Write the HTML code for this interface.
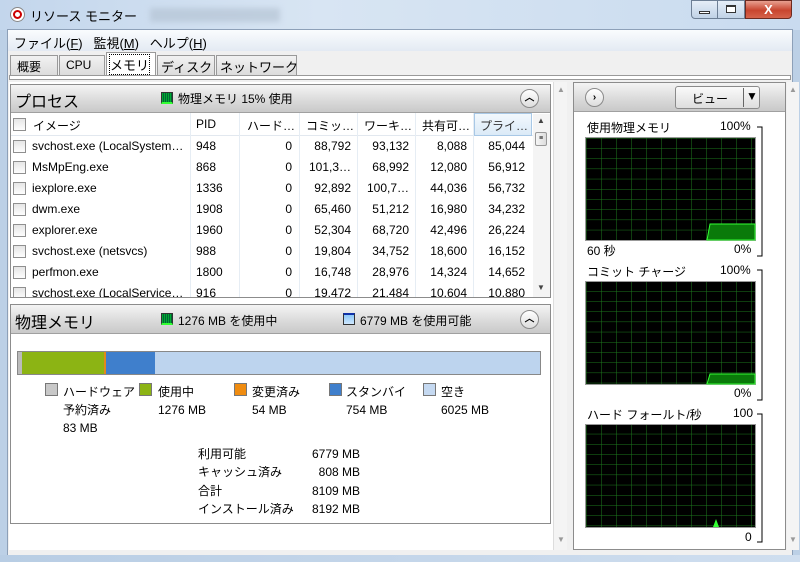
<!DOCTYPE html>
<html><head><meta charset="utf-8"><style>
*{margin:0;padding:0;box-sizing:border-box}
body{width:800px;height:562px;overflow:hidden;position:relative;background:#bcd0e6;font-family:"Liberation Sans","Noto Sans CJK JP",sans-serif;font-size:12px;color:#000}
.a{position:absolute}
.t{position:absolute;white-space:nowrap}
.cb{position:absolute;width:13px;height:13px;border:1px solid #8f8f8f;background:linear-gradient(#e6e6e6,#fdfdfd)}
.hdr{position:absolute;background:linear-gradient(#f4f4f4,#d9d9d9 60%,#c9c9c9);border-bottom:1px solid #a0a0a0}
.up{position:absolute;width:19px;height:19px;border-radius:50%;border:1px solid #8a8a8a;background:linear-gradient(#fff,#ddd);font-size:10px;text-align:center;line-height:17px;font-weight:bold}
.r{text-align:right}
.sw{position:absolute;width:13px;height:13px;border:1px solid #777}
</style></head><body>
<div class="a" style="left:0;top:0;width:800px;height:30px;background:linear-gradient(90deg,#c3d6ec,#d8e5f3 40%,#c9dbef)"></div>
<div class="a" style="left:10px;top:7px;width:15px;height:15px;border-radius:50%;border:1px solid #888;background:#fff"></div>
<div class="a" style="left:13px;top:10px;width:9px;height:9px;border-radius:50%;border:2px solid #c00"></div>
<div class="t" style="left:30px;top:6px;font-size:13px">リソース モニター</div>
<div class="a" style="left:150px;top:8px;width:130px;height:14px;background:#b0bfcf;filter:blur(3px);opacity:.6"></div>
<div class="a" style="left:691px;top:0;width:27px;height:19px;border:1px solid #6d7f95;border-radius:0 0 0 4px;background:linear-gradient(#e5eef8,#c0d2e6)"></div>
<div class="a" style="left:699px;top:11px;width:11px;height:3px;border:1px solid #333;background:#fff"></div>
<div class="a" style="left:717px;top:0;width:28px;height:19px;border:1px solid #6d7f95;background:linear-gradient(#e5eef8,#c0d2e6)"></div>
<div class="a" style="left:726px;top:5px;width:10px;height:8px;border:1px solid #333;border-top-width:2px;background:#fff"></div>
<div class="a" style="left:745px;top:0;width:47px;height:19px;border:1px solid #6d2a20;border-radius:0 0 4px 0;background:linear-gradient(#e8a090,#c8452f 55%,#d5634b);color:#fff;font-weight:bold;text-align:center;font-size:13px;line-height:17px">X</div>
<div class="a" style="left:7px;top:29px;width:786px;height:526px;background:#fff;border:1px solid #8da0b8"></div>
<div class="a" style="left:8px;top:30px;width:784px;height:21px;background:linear-gradient(#fafcfe,#e3eaf3)"></div>
<div class="t" style="left:14px;top:33px;font-size:13px">ファイル(<u>F</u>)&nbsp;&nbsp; 監視(<u>M</u>)&nbsp;&nbsp; ヘルプ(<u>H</u>)</div>
<div class="a" style="left:8px;top:51px;width:784px;height:504px;background:#f0f0f0"></div>
<div class="a" style="left:10px;top:55px;width:48px;height:20px;border:1px solid #999;border-bottom:none;background:linear-gradient(#f2f2f2,#dcdcdc)"></div><div class="t" style="left:17px;top:58px">概要</div>
<div class="a" style="left:59px;top:55px;width:46px;height:20px;border:1px solid #999;border-bottom:none;background:linear-gradient(#f2f2f2,#dcdcdc)"></div><div class="t" style="left:66px;top:58px">CPU</div>
<div class="a" style="left:106px;top:52px;width:50px;height:24px;border:1px solid #999;border-bottom:none;background:#fff"></div><div class="t" style="left:110px;top:55px;font-size:13px;outline:1px dotted #000">メモリ</div>
<div class="a" style="left:157px;top:55px;width:58px;height:20px;border:1px solid #999;border-bottom:none;background:linear-gradient(#f2f2f2,#dcdcdc)"></div><div class="t" style="left:161px;top:57px;font-size:13px">ディスク</div>
<div class="a" style="left:216px;top:55px;width:81px;height:20px;border:1px solid #999;border-bottom:none;background:linear-gradient(#f2f2f2,#dcdcdc)"></div><div class="t" style="left:220px;top:57px;font-size:13px">ネットワーク</div>
<div class="a" style="left:9px;top:75px;width:782px;height:5px;border:1px solid #999;background:#fff"></div>
<div class="a" style="left:9px;top:82px;width:544px;height:468px;background:#fff"></div>
<div class="a" style="left:553px;top:82px;width:14px;height:468px;background:#f4f4f4;border-left:1px solid #ddd"></div>
<div class="t" style="left:557px;top:85px;font-size:8px;color:#999">▲</div>
<div class="t" style="left:557px;top:535px;font-size:8px;color:#999">▼</div>
<div class="a" style="left:10px;top:84px;width:541px;height:214px;border:1px solid #8c8c8c;background:#fff"></div>
<div class="hdr" style="left:11px;top:85px;width:539px;height:28px"></div>
<div class="t" style="left:15px;top:88px;font-size:16px">プロセス</div>
<div class="a" style="left:161px;top:92px;width:12px;height:12px;background:repeating-linear-gradient(90deg,#0a3 0 1px,#063 1px 2px);border:1px solid #333;border-bottom:2px solid #3f3"></div>
<div class="t" style="left:178px;top:90px">物理メモリ 15% 使用</div>
<div class="up" style="left:520px;top:89px">︿</div>
<div class="a" style="left:11px;top:113px;width:539px;height:23px;background:#fff;border-bottom:1px solid #e2e8ef"></div>
<div class="a" style="left:474px;top:113px;width:58px;height:23px;background:linear-gradient(#f2f8fd,#dbeaf7);border:1px solid #a8c8e6"></div>
<div class="cb" style="left:13px;top:118px"></div>
<div class="t" style="left:33px;top:117px">イメージ</div>
<div class="t" style="left:196px;top:117px">PID</div>
<div class="t" style="left:247px;top:117px">ハード…</div>
<div class="t" style="left:306px;top:117px">コミッ…</div>
<div class="t" style="left:364px;top:117px">ワーキ…</div>
<div class="t" style="left:422px;top:117px">共有可…</div>
<div class="t" style="left:480px;top:117px;color:#333">プライ…</div>
<div class="a" style="left:190px;top:113px;width:1px;height:184px;background:#e6edf4"></div>
<div class="a" style="left:239px;top:113px;width:1px;height:184px;background:#e6edf4"></div>
<div class="a" style="left:299px;top:113px;width:1px;height:184px;background:#e6edf4"></div>
<div class="a" style="left:357px;top:113px;width:1px;height:184px;background:#e6edf4"></div>
<div class="a" style="left:415px;top:113px;width:1px;height:184px;background:#e6edf4"></div>
<div class="a" style="left:473px;top:113px;width:1px;height:184px;background:#e6edf4"></div>
<div class="a" style="left:533px;top:114px;width:17px;height:183px;background:#f4f4f4"></div>
<div class="t" style="left:537px;top:116px;font-size:8px;color:#444">▲</div>
<div class="a" style="left:535px;top:132px;width:12px;height:14px;border:1px solid #999;border-radius:2px;background:linear-gradient(90deg,#f6f6f6,#ddd);font-size:7px;text-align:center;line-height:11px">≡</div>
<div class="t" style="left:537px;top:283px;font-size:8px;color:#444">▼</div>
<div class="a" style="left:10px;top:304px;width:541px;height:220px;border:1px solid #8c8c8c;background:#fff"></div>
<div class="hdr" style="left:11px;top:305px;width:539px;height:29px"></div>
<div class="t" style="left:15px;top:309px;font-size:16px">物理メモリ</div>
<div class="a" style="left:161px;top:313px;width:12px;height:12px;background:repeating-linear-gradient(90deg,#0a3 0 1px,#063 1px 2px);border:1px solid #333;border-bottom:2px solid #3f3"></div>
<div class="t" style="left:178px;top:312px">1276 MB を使用中</div>
<div class="a" style="left:343px;top:313px;width:12px;height:12px;background:linear-gradient(#8cc8f8,#cfe7fd);border:1px solid #333;border-top:2px solid #13a"></div>
<div class="t" style="left:360px;top:312px">6779 MB を使用可能</div>
<div class="up" style="left:520px;top:310px">︿</div>
<div class="a" style="left:17px;top:351px;width:524px;height:24px;border:1px solid #888;background:#bdd4ee;display:flex">
<div style="width:4px;background:#bbb"></div><div style="width:82px;background:#8cb414"></div><div style="width:2px;background:#e08a1c"></div><div style="width:49px;background:#3f7fcc"></div></div>
<div class="sw" style="left:45px;top:383px;background:#c8c8c8"></div><div class="t" style="left:63px;top:383px;line-height:18px">ハードウェア<br>予約済み<br>83 MB</div>
<div class="sw" style="left:139px;top:383px;background:#8cb414"></div><div class="t" style="left:158px;top:383px;line-height:18px">使用中<br>1276 MB</div>
<div class="sw" style="left:234px;top:383px;background:#f08c10"></div><div class="t" style="left:252px;top:383px;line-height:18px">変更済み<br>54 MB</div>
<div class="sw" style="left:329px;top:383px;background:#3f7fcc"></div><div class="t" style="left:346px;top:383px;line-height:18px">スタンバイ<br>754 MB</div>
<div class="sw" style="left:423px;top:383px;background:#c5d9f1"></div><div class="t" style="left:441px;top:383px;line-height:18px">空き<br>6025 MB</div>
<div class="t" style="left:198px;top:445px;line-height:18.3px">利用可能<br>キャッシュ済み<br>合計<br>インストール済み</div>
<div class="t r" style="left:300px;top:445px;width:60px;line-height:18.3px">6779 MB<br>808 MB<br>8109 MB<br>8192 MB</div>
<div class="a" style="left:573px;top:82px;width:213px;height:468px;border:1px solid #8c8c8c;background:#fff"></div>
<div class="hdr" style="left:574px;top:83px;width:211px;height:29px"></div>
<div class="up" style="left:585px;top:88px">›</div>
<div class="a" style="left:675px;top:86px;width:85px;height:23px;border:1px solid #8a8a8a;border-radius:3px;background:linear-gradient(#fafafa,#dedede)"></div>
<div class="t" style="left:692px;top:90px">ビュー</div>
<div class="a" style="left:743px;top:88px;width:1px;height:19px;background:#666"></div>
<div class="t" style="left:746px;top:89px;font-size:12px">▼</div>
<div class="a" style="left:787px;top:82px;width:12px;height:468px;background:#f4f4f4"></div>
<div class="t" style="left:789px;top:85px;font-size:8px;color:#999">▲</div>
<div class="t" style="left:789px;top:535px;font-size:8px;color:#999">▼</div>
<svg class="a" style="left:0;top:0" width="800" height="562">
<defs><pattern id="g" x="586" y="138" width="15" height="10.2" patternUnits="userSpaceOnUse"><rect width="15" height="10.2" fill="#000"/><path d="M0 0V10.2M0 0H15" stroke="#1e7a1e" stroke-width="1"/></pattern></defs>
<rect x="585.5" y="137.5" width="170" height="103" fill="url(#g)" stroke="#999"/>
<path d="M707 240L710 224H755V240Z" fill="#0a7a0a" stroke="#3f3"/>
<rect x="585.5" y="281.5" width="170" height="103" fill="url(#g)" stroke="#999"/>
<path d="M707 384L710 374H755V384Z" fill="#0a7a0a" stroke="#3f3"/>
<rect x="585.5" y="424.5" width="170" height="103" fill="url(#g)" stroke="#999"/>
<path d="M713 527L716 519L719 527Z" fill="#3f3"/>
<path d="M757 127H762V256H757M757 270H762V400H757M757 414H762V542H757" fill="none" stroke="#000"/>
</svg>
<div class="t" style="left:587px;top:119px">使用物理メモリ</div><div class="t" style="left:720px;top:119px">100%</div>
<div class="t" style="left:587px;top:242px">60 秒</div><div class="t" style="left:734px;top:242px">0%</div>
<div class="t" style="left:587px;top:263px">コミット チャージ</div><div class="t" style="left:720px;top:263px">100%</div>
<div class="t" style="left:734px;top:386px">0%</div>
<div class="t" style="left:587px;top:406px">ハード フォールト/秒</div><div class="t" style="left:733px;top:406px">100</div>
<div class="t" style="left:745px;top:530px">0</div>
<div class="a" style="left:11px;top:136px;width:522px;height:161px;overflow:hidden;font-size:12px">
<div style="position:relative;height:21px"><div class="cb" style="left:2px;top:4px"></div><span class="t" style="left:21px;top:3px">svchost.exe (LocalSystem…</span><span class="t" style="left:185px;top:3px">948</span><span class="t r" style="left:229px;top:3px;width:52px">0</span><span class="t r" style="left:289px;top:3px;width:51px">88,792</span><span class="t r" style="left:347px;top:3px;width:51px">93,132</span><span class="t r" style="left:405px;top:3px;width:51px">8,088</span><span class="t r" style="left:463px;top:3px;width:51px">85,044</span></div>
<div style="position:relative;height:21px"><div class="cb" style="left:2px;top:4px"></div><span class="t" style="left:21px;top:3px">MsMpEng.exe</span><span class="t" style="left:185px;top:3px">868</span><span class="t r" style="left:229px;top:3px;width:52px">0</span><span class="t r" style="left:289px;top:3px;width:51px">101,3…</span><span class="t r" style="left:347px;top:3px;width:51px">68,992</span><span class="t r" style="left:405px;top:3px;width:51px">12,080</span><span class="t r" style="left:463px;top:3px;width:51px">56,912</span></div>
<div style="position:relative;height:21px"><div class="cb" style="left:2px;top:4px"></div><span class="t" style="left:21px;top:3px">iexplore.exe</span><span class="t" style="left:185px;top:3px">1336</span><span class="t r" style="left:229px;top:3px;width:52px">0</span><span class="t r" style="left:289px;top:3px;width:51px">92,892</span><span class="t r" style="left:347px;top:3px;width:51px">100,7…</span><span class="t r" style="left:405px;top:3px;width:51px">44,036</span><span class="t r" style="left:463px;top:3px;width:51px">56,732</span></div>
<div style="position:relative;height:21px"><div class="cb" style="left:2px;top:4px"></div><span class="t" style="left:21px;top:3px">dwm.exe</span><span class="t" style="left:185px;top:3px">1908</span><span class="t r" style="left:229px;top:3px;width:52px">0</span><span class="t r" style="left:289px;top:3px;width:51px">65,460</span><span class="t r" style="left:347px;top:3px;width:51px">51,212</span><span class="t r" style="left:405px;top:3px;width:51px">16,980</span><span class="t r" style="left:463px;top:3px;width:51px">34,232</span></div>
<div style="position:relative;height:21px"><div class="cb" style="left:2px;top:4px"></div><span class="t" style="left:21px;top:3px">explorer.exe</span><span class="t" style="left:185px;top:3px">1960</span><span class="t r" style="left:229px;top:3px;width:52px">0</span><span class="t r" style="left:289px;top:3px;width:51px">52,304</span><span class="t r" style="left:347px;top:3px;width:51px">68,720</span><span class="t r" style="left:405px;top:3px;width:51px">42,496</span><span class="t r" style="left:463px;top:3px;width:51px">26,224</span></div>
<div style="position:relative;height:21px"><div class="cb" style="left:2px;top:4px"></div><span class="t" style="left:21px;top:3px">svchost.exe (netsvcs)</span><span class="t" style="left:185px;top:3px">988</span><span class="t r" style="left:229px;top:3px;width:52px">0</span><span class="t r" style="left:289px;top:3px;width:51px">19,804</span><span class="t r" style="left:347px;top:3px;width:51px">34,752</span><span class="t r" style="left:405px;top:3px;width:51px">18,600</span><span class="t r" style="left:463px;top:3px;width:51px">16,152</span></div>
<div style="position:relative;height:21px"><div class="cb" style="left:2px;top:4px"></div><span class="t" style="left:21px;top:3px">perfmon.exe</span><span class="t" style="left:185px;top:3px">1800</span><span class="t r" style="left:229px;top:3px;width:52px">0</span><span class="t r" style="left:289px;top:3px;width:51px">16,748</span><span class="t r" style="left:347px;top:3px;width:51px">28,976</span><span class="t r" style="left:405px;top:3px;width:51px">14,324</span><span class="t r" style="left:463px;top:3px;width:51px">14,652</span></div>
<div style="position:relative;height:21px"><div class="cb" style="left:2px;top:4px"></div><span class="t" style="left:21px;top:3px">svchost.exe (LocalService…</span><span class="t" style="left:185px;top:3px">916</span><span class="t r" style="left:229px;top:3px;width:52px">0</span><span class="t r" style="left:289px;top:3px;width:51px">19,472</span><span class="t r" style="left:347px;top:3px;width:51px">21,484</span><span class="t r" style="left:405px;top:3px;width:51px">10,604</span><span class="t r" style="left:463px;top:3px;width:51px">10,880</span></div>
</div>
<div class="a" style="left:0;top:555px;width:800px;height:7px;background:linear-gradient(90deg,#b8cde4,#cfdeef)"></div>
</body></html>
